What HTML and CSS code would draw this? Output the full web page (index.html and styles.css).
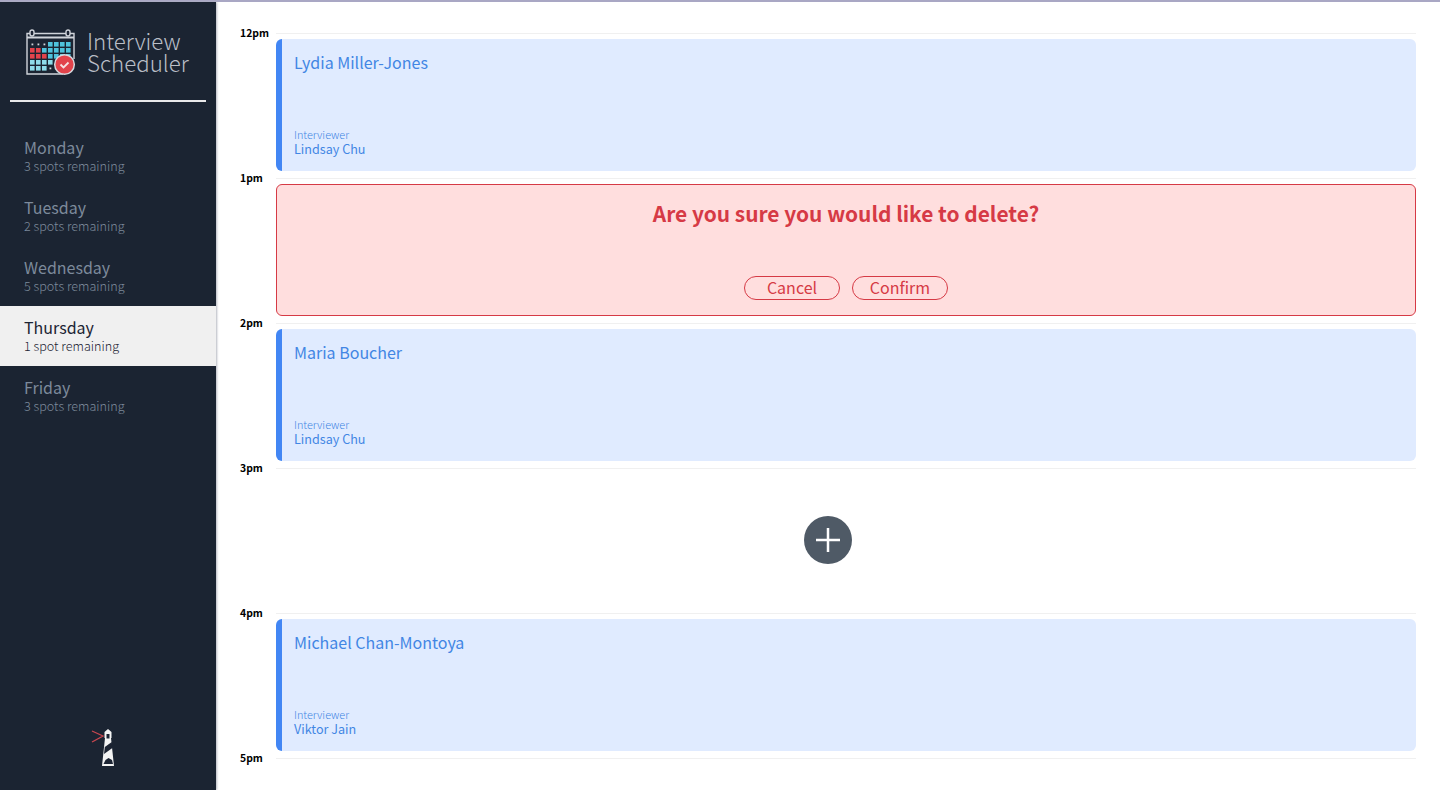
FILE: index.html
```html
<!DOCTYPE html>
<html>

  <head>
    <title>Interview Scheduler</title>
    <link rel="stylesheet" href="styles.css">
  </head>

  <body>
    <div class="layout">
      <nav class="sidebar">
        <div class="brand">
          <svg class="brand-icon" width="50" height="47" viewBox="0 0 50 47">
            <g fill="none" stroke="#d0d4da" stroke-width="1.400">
              <path d="M37 45H1V4.500h47V30"/>
              <path d="M1 8.500h47" stroke-width="1.800"/>
              <rect x="4" y="1" width="4" height="6" rx="2" fill="#1c2433"/>
              <rect x="40" y="1" width="4" height="6" rx="2" fill="#1c2433"/>
            </g>
            <g fill="#d0d4da">
              <rect x="5.500" y="14.500" width="1.800" height="1.800"/>
              <rect x="11.500" y="14.500" width="1.800" height="1.800"/>
              <rect x="17.500" y="14.500" width="1.800" height="1.800"/>
              <rect x="23.500" y="38.500" width="1.800" height="1.800"/>
            </g>
            <g fill="#4fc3dc">
              <rect x="22" y="13" width="4.600" height="4.600"/>
              <rect x="28" y="13" width="4.600" height="4.600"/>
              <rect x="34" y="13" width="4.600" height="4.600"/>
              <rect x="40" y="13" width="4.600" height="4.600"/>
              <rect x="16" y="19" width="4.600" height="4.600"/>
              <rect x="22" y="19" width="4.600" height="4.600"/>
              <rect x="28" y="19" width="4.600" height="4.600"/>
              <rect x="34" y="19" width="4.600" height="4.600"/>
              <rect x="40" y="19" width="4.600" height="4.600"/>
              <rect x="22" y="25" width="4.600" height="4.600"/>
              <rect x="28" y="25" width="4.600" height="4.600"/>
              <rect x="34" y="25" width="4.600" height="4.600"/>
              <rect x="40" y="25" width="4.600" height="4.600"/>
            </g>
            <g fill="#8fdcea">
              <rect x="4" y="31" width="4.600" height="4.600"/>
              <rect x="10" y="31" width="4.600" height="4.600"/>
              <rect x="16" y="31" width="4.600" height="4.600"/>
              <rect x="22" y="31" width="4.600" height="4.600"/>
              <rect x="4" y="37" width="4.600" height="4.600"/>
              <rect x="10" y="37" width="4.600" height="4.600"/>
              <rect x="16" y="37" width="4.600" height="4.600"/>
            </g>
            <g fill="#e2434b">
              <rect x="4" y="19" width="4.600" height="4.600"/>
              <rect x="10" y="19" width="4.600" height="4.600"/>
              <rect x="4" y="25" width="4.600" height="4.600"/>
              <rect x="10" y="25" width="4.600" height="4.600"/>
              <rect x="16" y="25" width="4.600" height="4.600"/>
            </g>
            <circle cx="38.500" cy="35.500" r="9.800" fill="#e2434b" stroke="#d5d9df" stroke-width="1.500"/>
            <path d="M34.500 35.500l3 3 5-5" fill="none" stroke="#f6e3e3" stroke-width="1.800"/>
          </svg>
          <div class="brand-name">Interview<br>Scheduler</div>
        </div>
        <hr class="divider">
        <ul class="days">
          <li class="day"><h2>Monday</h2><p>3 spots remaining</p></li>
          <li class="day"><h2>Tuesday</h2><p>2 spots remaining</p></li>
          <li class="day"><h2>Wednesday</h2><p>5 spots remaining</p></li>
          <li class="day day-selected"><h2>Thursday</h2><p>1 spot remaining</p></li>
          <li class="day"><h2>Friday</h2><p>3 spots remaining</p></li>
        </ul>
        <svg class="lhl" width="30" height="45" viewBox="0 0 30 45">
          <path d="M4 6l11 5L4 17" fill="none" stroke="#c8474f" stroke-width="1.300"/>
          <path d="M20 4l3.500 3v6h-.5l3 28H14l3-28h-.5V7z" fill="#f4f4f4"/>
          <rect x="18.500" y="9" width="3" height="4.500" fill="#1c2433"/>
          <path d="M16.800 22l7-5 .6 6-8.400 6zM15.500 39l2-4 3-2 3.500 2 1 4z" fill="#1c2433"/>
        </svg>
      </nav>

      <main class="schedule">
        <section class="slot">
          <h4 class="slot-time">12pm</h4>
          <div class="slot-body">
            <div class="card">
              <h2>Lydia Miller-Jones</h2>
              <div>
                <h4>Interviewer</h4>
                <h3>Lindsay Chu</h3>
              </div>
            </div>
          </div>
        </section>

        <section class="slot">
          <h4 class="slot-time">1pm</h4>
          <div class="slot-body">
            <div class="confirm">
              <h1>Are you sure you would like to delete?</h1>
              <div class="confirm-actions">
                <button class="btn">Cancel</button>
                <button class="btn">Confirm</button>
              </div>
            </div>
          </div>
        </section>

        <section class="slot">
          <h4 class="slot-time">2pm</h4>
          <div class="slot-body">
            <div class="card">
              <h2>Maria Boucher</h2>
              <div>
                <h4>Interviewer</h4>
                <h3>Lindsay Chu</h3>
              </div>
            </div>
          </div>
        </section>

        <section class="slot">
          <h4 class="slot-time">3pm</h4>
          <div class="slot-body">
            <div class="empty">
              <svg class="add" width="48" height="48" viewBox="0 0 48 48">
                <circle cx="24" cy="24" r="24" fill="#4f5a66"/>
                <path d="M12 24h24M24 12v24" stroke="#fff" stroke-width="2.500"/>
              </svg>
            </div>
          </div>
        </section>

        <section class="slot">
          <h4 class="slot-time">4pm</h4>
          <div class="slot-body">
            <div class="card">
              <h2>Michael Chan-Montoya</h2>
              <div>
                <h4>Interviewer</h4>
                <h3>Viktor Jain</h3>
              </div>
            </div>
          </div>
        </section>

        <section class="slot slot-last">
          <h4 class="slot-time">5pm</h4>
          <div class="slot-body"></div>
        </section>
      </main>
    </div>
  </body>

</html>
```
FILE: styles.css
```css
* {box-sizing: border-box;}
html, body {height: 100%;}
body {
  margin: 0;
  background-color: #fff;
  font-family: "Noto Sans CJK SC", "Noto Sans", sans-serif;
  overflow: hidden;
}
h1, h2, h3, h4, p, ul {margin: 0; padding: 0;}

.layout {
  display: flex;
  height: 100%;
  border-top: 2px solid #a9a7c4;
}

/* sidebar */
.sidebar {
  display: flex;
  flex-direction: column;
  flex: 0 0 216px;
  background-color: #1b2432;
  box-shadow: 1px 0 2px #b5b8c0;
}
.brand {
  display: flex;
  align-items: flex-start;
  gap: 11px;
  height: 98px;
  padding: 27px 0 0 26px;
}
.brand-name {
  margin-top: 1px;
  font-size: 22.300px;
  font-weight: 300;
  line-height: 21.500px;
  color: #b9bec7;
}
.divider {
  width: 196px;
  height: 2px;
  margin: 0 0 24px 10px;
  border: 0;
  background-color: #e9e9ea;
}
.days {list-style: none;}
.day {
  height: 60px;
  padding: 11px 24px 0;
  color: #7d8a9b;
}
.day h2 {font-size: 16px; font-weight: 400; line-height: 20px;}
.day p {font-size: 12.600px; font-weight: 300; line-height: 18px;}
.day-selected {background-color: #f0f0f0; color: #1c2433;}
.lhl {margin: auto 0 20px 88px;}

/* schedule */
.schedule {
  flex: 1;
  padding: 31px 24px 0 24px;
}
.slot {
  display: flex;
  height: 145px;
}
.slot-last {height: 20px;}
.slot-time {
  flex: 0 0 36px;
  margin-top: -7px;
  font-size: 10.400px;
  font-weight: 700;
  line-height: 14px;
  color: #000;
}
.slot-body {
  flex: 1;
  padding: 5px 0 0;
  border-top: 1px solid #f0f0f0;
}

.card {
  display: flex;
  flex-direction: column;
  justify-content: space-between;
  height: 132px;
  padding: 11px 12px 15px;
  border-left: 6px solid #4286f4;
  border-radius: 6px;
  background-color: #e0ebff;
  color: #4286e4;
}
.card h2 {font-size: 16px; font-weight: 400; line-height: 24px;}
.card h4 {font-size: 10.800px; font-weight: 300; line-height: 14px;}
.card h3 {font-size: 12.600px; font-weight: 400; line-height: 14px; margin-top: 1px;}

.confirm {
  display: flex;
  flex-direction: column;
  justify-content: space-between;
  height: 132px;
  padding: 13px 12px 15px;
  border: 1px solid #d63a45;
  border-radius: 6px;
  background-color: #ffdede;
  color: #d63a45;
  text-align: center;
}
.confirm h1 {font-size: 20.900px; font-weight: 700; line-height: 30px;}
.confirm-actions {
  display: flex;
  justify-content: center;
  gap: 12px;
}
.btn {
  width: 96px;
  height: 24px;
  padding: 0 0 2px;
  border: 1px solid #d63a45;
  border-radius: 12px;
  background: none;
  color: #d63a45;
  font-family: inherit;
  font-size: 16px;
  line-height: 20px;
}

.empty {
  display: flex;
  justify-content: center;
  height: 132px;
  padding: 42px 36px 0 0;
}
```
